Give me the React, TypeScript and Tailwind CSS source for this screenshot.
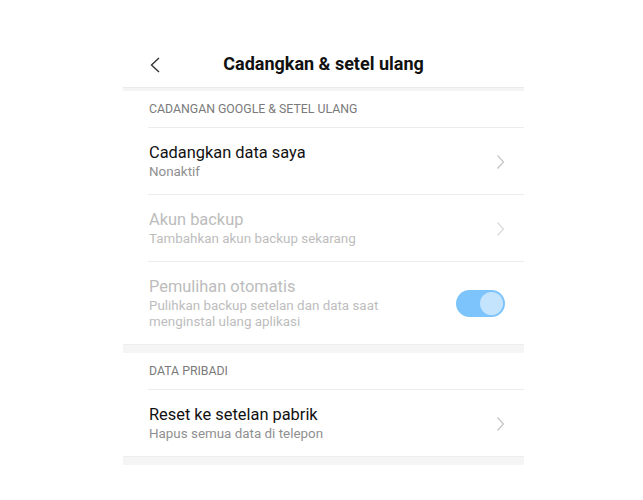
import React from "react";

const font = { fontFamily: "Roboto, 'Noto Sans', sans-serif" };

function Chevron({ light }: { light?: boolean }) {
  return (
    <svg width="9" height="16" viewBox="0 0 9 16" className="shrink-0">
      <polyline
        points="1.5,1.5 7.5,8 1.5,14.5"
        fill="none"
        stroke={light ? "#dadada" : "#c4c4c4"}
        strokeWidth="1.2"
      />
    </svg>
  );
}

function Divider() {
  return <div className="ml-[25px] h-px bg-[#ececec]" />;
}

function Band() {
  return <div className="h-[9px] bg-[#f5f5f5] border-t border-[#eeeeee]" />;
}

function Section({ label }: { label: string }) {
  return (
    <div className="h-[36px] flex items-center pl-[26px] text-[12.3px] text-[#7a7a7a]">
      {label}
    </div>
  );
}

function Row({
  title,
  sub,
  disabled,
  right,
}: {
  title: string;
  sub: React.ReactNode;
  disabled?: boolean;
  right: React.ReactNode;
}) {
  return (
    <div className="flex items-center pl-[26px] pr-[19px] pt-[15px] pb-[14px]">
      <div className="flex-1 min-w-0">
        <div
          className={`text-[16.4px] leading-[20px] ${disabled ? "text-[#bcbcbc]" : "text-[#111111]"}`}
        >
          {title}
        </div>
        <div
          className={`mt-[1px] text-[13.4px] leading-[16px] ${disabled ? "text-[#bdbdbd]" : "text-[#8f8f8f]"}`}
        >
          {sub}
        </div>
      </div>
      {right}
    </div>
  );
}

export default function App() {
  return (
    <div className="w-[643px] h-[500px] bg-white" style={font}>
      <div className="ml-[123px] w-[401px]">
        <div className="h-[40px]" />
        <div className="relative h-[47px] flex items-center justify-center">
          <svg
            width="12"
            height="16"
            viewBox="0 0 12 16"
            className="absolute left-[26px] top-[17px]"
          >
            <polyline
              points="10,1 2.5,8 10,15"
              fill="none"
              stroke="#333333"
              strokeWidth="1.4"
            />
          </svg>
          <div className="text-[18px] font-bold text-[#111111]">
            Cadangkan &amp; setel ulang
          </div>
        </div>
        <div className="h-[4px] bg-[#f4f4f4] border-t border-[#eaeaea]" />
        <Section label="CADANGAN GOOGLE & SETEL ULANG" />
        <Divider />
        <Row title="Cadangkan data saya" sub="Nonaktif" right={<Chevron />} />
        <Divider />
        <Row
          title="Akun backup"
          sub="Tambahkan akun backup sekarang"
          disabled
          right={<Chevron light />}
        />
        <Divider />
        <Row
          title="Pemulihan otomatis"
          sub={
            <>
              Pulihkan backup setelan dan data saat
              <br />
              menginstal ulang aplikasi
            </>
          }
          disabled
          right={
            <div className="w-[49px] h-[27px] rounded-full bg-[#7cc4fb] flex items-center justify-end pr-[2px] shrink-0">
              <div className="w-[23px] h-[23px] rounded-full bg-[#c4e3fd]" />
            </div>
          }
        />
        <Band />
        <Section label="DATA PRIBADI" />
        <Divider />
        <Row
          title="Reset ke setelan pabrik"
          sub="Hapus semua data di telepon"
          right={<Chevron />}
        />
        <Band />
      </div>
    </div>
  );
}
